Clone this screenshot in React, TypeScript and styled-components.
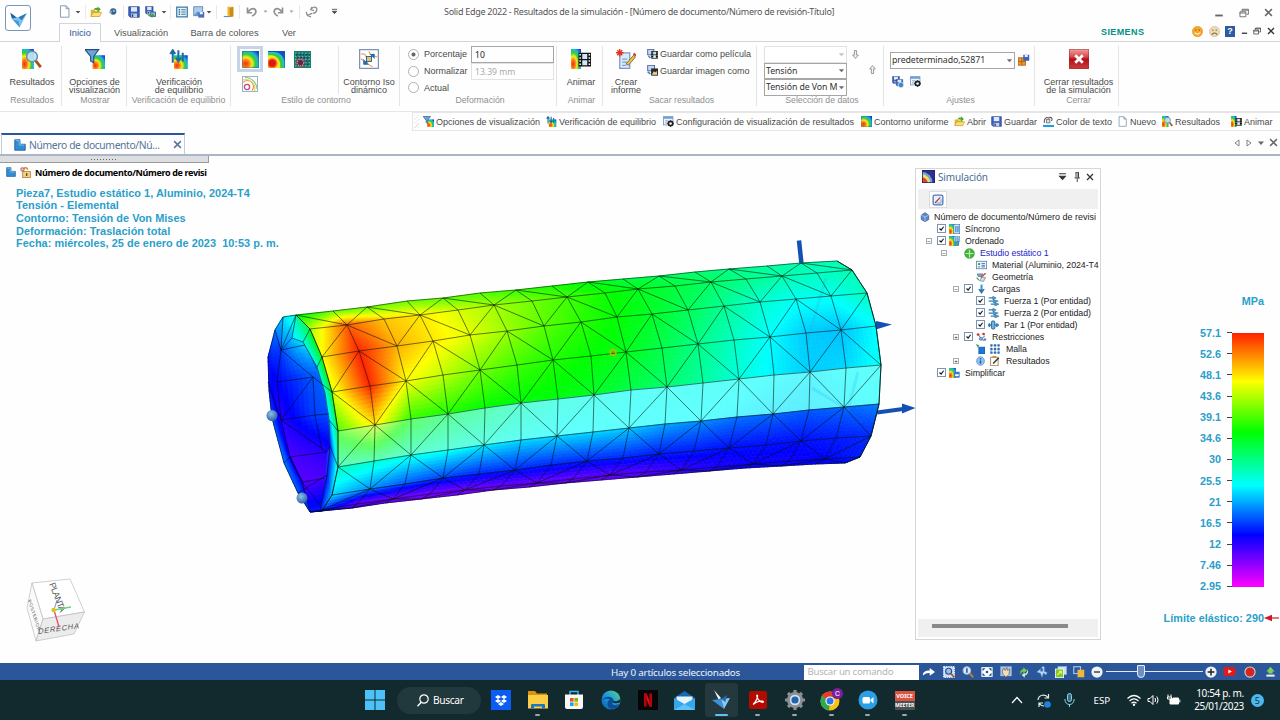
import React from "react";
import styled, { createGlobalStyle } from "styled-components";

type Pt = [number, number];

// ---------- colour scale ----------

const stops: [number, number[]][] = [
  [0, [255, 0, 255]],
  [0.1, [128, 0, 255]],
  [0.2, [0, 0, 255]],
  [0.4, [0, 255, 255]],
  [0.61, [0, 255, 0]],
  [0.81, [255, 255, 0]],
  [1, [255, 32, 0]],
];

const colorAt = (t: number, light = 0) => {
  const v = Math.max(0, Math.min(1, t));
  let i = 0;
  while (i < stops.length - 2 && v > stops[i + 1][0]) i++;
  const [a, ca] = stops[i];
  const [b, cb] = stops[i + 1];
  const k = (v - a) / (b - a);
  const rgb = ca.map((c, n) => {
    const x = c + (cb[n] - c) * k;
    return Math.round(x + (255 - x) * light);
  });
  return `rgb(${rgb.join(",")})`;
};

// ---------- mesh ----------

const rows: Pt[][] = [
  [[296, 315], [333, 311], [367, 307], [407, 301], [443, 298], [480, 293], [516, 290], [552, 286], [588, 282], [623, 279], [659, 276], [695, 272], [729, 269], [767, 266], [801, 263], [837, 261]],
  [[310, 329], [347, 325], [384, 319], [420, 315], [458, 310], [494, 305], [532, 301], [567, 297], [605, 293], [638, 289], [675, 286], [711, 282], [746, 279], [782, 276], [817, 273], [852, 270]],
  [[322, 357], [359, 351], [397, 346], [433, 341], [470, 335], [507, 331], [544, 326], [581, 322], [617, 317], [652, 314], [688, 310], [724, 306], [760, 302], [796, 299], [831, 296], [867, 293]],
  [[332, 392], [370, 386], [406, 381], [443, 375], [480, 370], [517, 365], [553, 360], [591, 356], [626, 352], [662, 348], [698, 344], [734, 340], [770, 337], [806, 333], [841, 330], [876, 326]],
  [[338, 431], [375, 425], [411, 419], [448, 414], [485, 408], [521, 403], [558, 399], [594, 395], [631, 390], [667, 387], [703, 383], [739, 379], [774, 375], [810, 372], [846, 368], [881, 365]],
  [[338, 467], [374, 461], [411, 455], [448, 450], [484, 445], [521, 440], [557, 436], [593, 432], [629, 428], [665, 424], [701, 421], [737, 417], [773, 414], [809, 410], [844, 407], [879, 404]],
  [[332, 495], [370, 489], [405, 484], [443, 478], [479, 474], [515, 470], [551, 465], [587, 461], [623, 458], [659, 454], [694, 451], [729, 448], [766, 445], [801, 441], [836, 438], [871, 436]],
  [[322, 510], [357, 504], [393, 499], [430, 494], [465, 490], [501, 486], [537, 483], [573, 479], [610, 475], [646, 472], [681, 470], [717, 467], [753, 464], [789, 461], [825, 459], [860, 457]],
  [[310, 512], [352, 508], [385, 503], [421, 499], [457, 495], [493, 490], [529, 487], [565, 483], [601, 480], [637, 477], [673, 474], [709, 471], [745, 468], [781, 466], [815, 464], [845, 463]],
];

// [upper edge values, lower edge values, whitening]
const strips: [number[], number[], number][] = [
  [
    [0.58, 0.68, 0.69, 0.69, 0.68, 0.67, 0.65, 0.63, 0.6, 0.56, 0.54, 0.52, 0.5, 0.48, 0.47, 0.46],
    [0.74, 0.95, 0.85, 0.82, 0.77, 0.73, 0.7, 0.66, 0.62, 0.59, 0.56, 0.53, 0.5, 0.47, 0.45, 0.46],
    0,
  ],
  [
    [0.74, 0.95, 0.86, 0.83, 0.78, 0.74, 0.7, 0.66, 0.62, 0.59, 0.56, 0.53, 0.5, 0.47, 0.45, 0.46],
    [0.81, 1, 0.88, 0.83, 0.79, 0.73, 0.68, 0.64, 0.61, 0.58, 0.54, 0.49, 0.44, 0.41, 0.41, 0.45],
    0,
  ],
  [
    [0.81, 1, 0.88, 0.83, 0.79, 0.73, 0.68, 0.64, 0.61, 0.58, 0.54, 0.49, 0.44, 0.41, 0.41, 0.45],
    [0.78, 1, 0.81, 0.76, 0.7, 0.66, 0.63, 0.61, 0.59, 0.55, 0.5, 0.45, 0.4, 0.36, 0.35, 0.4],
    0,
  ],
  [
    [0.78, 1, 0.81, 0.76, 0.7, 0.66, 0.63, 0.61, 0.59, 0.55, 0.5, 0.45, 0.4, 0.36, 0.35, 0.4],
    [0.67, 0.83, 0.65, 0.63, 0.61, 0.6, 0.6, 0.58, 0.55, 0.52, 0.48, 0.43, 0.39, 0.36, 0.37, 0.41],
    0,
  ],
  [
    [0.64, 0.78, 0.6, 0.54, 0.5, 0.46, 0.43, 0.42, 0.41, 0.41, 0.41, 0.41, 0.4, 0.39, 0.4, 0.41],
    [0.48, 0.49, 0.46, 0.44, 0.43, 0.41, 0.4, 0.4, 0.4, 0.4, 0.4, 0.39, 0.38, 0.38, 0.39, 0.4],
    0.37,
  ],
  [
    [0.45, 0.44, 0.42, 0.41, 0.39, 0.37, 0.37, 0.37, 0.36, 0.33, 0.31, 0.29, 0.28, 0.27, 0.28, 0.3],
    [0.37, 0.31, 0.27, 0.25, 0.23, 0.23, 0.23, 0.23, 0.23, 0.22, 0.22, 0.21, 0.21, 0.21, 0.22, 0.23],
    0,
  ],
  [
    [0.37, 0.29, 0.25, 0.23, 0.22, 0.22, 0.22, 0.22, 0.22, 0.22, 0.22, 0.21, 0.21, 0.21, 0.22, 0.23],
    [0.24, 0.12, 0.11, 0.11, 0.11, 0.12, 0.12, 0.12, 0.13, 0.14, 0.16, 0.18, 0.19, 0.19, 0.2, 0.22],
    0,
  ],
  [
    [0.24, 0.12, 0.11, 0.11, 0.11, 0.12, 0.12, 0.12, 0.13, 0.14, 0.16, 0.18, 0.19, 0.19, 0.2, 0.22],
    [0.2, 0.15, 0.12, 0.11, 0.11, 0.11, 0.11, 0.12, 0.12, 0.13, 0.15, 0.17, 0.19, 0.19, 0.2, 0.2],
    0,
  ],
];

// end face of the tube, as quads: corners followed by their values
const endQuads: [Pt, Pt, Pt, Pt, number[]][] = [
  // bore
  [[281, 350], [292, 338], [277, 382], [313, 377], [0.24, 0.36, 0.2, 0.27]],
  [[292, 338], [303, 342], [313, 377], [319, 375], [0.36, 0.38, 0.27, 0.28]],
  [[277, 382], [313, 377], [281, 420], [315, 415], [0.2, 0.27, 0.17, 0.25]],
  [[313, 377], [319, 375], [315, 415], [329, 413], [0.27, 0.28, 0.25, 0.26]],
  [[281, 420], [315, 415], [290, 457], [327, 452], [0.17, 0.25, 0.14, 0.17]],
  [[315, 415], [329, 413], [327, 452], [330, 446], [0.25, 0.26, 0.17, 0.2]],
  [[290, 457], [327, 452], [302, 482], [325, 478], [0.14, 0.17, 0.13, 0.14]],
  [[302, 482], [325, 478], [310, 512], [323, 511], [0.13, 0.15, 0.22, 0.22]],
  // left side of the rim
  [[283, 317], [296, 315], [281, 350], [292, 338], [0.38, 0.44, 0.3, 0.33]],
  [[283, 317], [281, 350], [275, 330], [279, 352], [0.36, 0.28, 0.32, 0.26]],
  [[275, 330], [281, 350], [268, 357], [277, 382], [0.3, 0.24, 0.22, 0.2]],
  [[268, 357], [277, 382], [269, 390], [281, 420], [0.22, 0.19, 0.21, 0.17]],
  [[269, 390], [281, 420], [272, 418], [290, 457], [0.22, 0.18, 0.26, 0.19]],
  [[272, 418], [290, 457], [284, 463], [302, 482], [0.28, 0.18, 0.3, 0.19]],
  [[284, 463], [302, 482], [298, 493], [310, 512], [0.3, 0.2, 0.28, 0.24]],
  // right side of the rim
  [[296, 315], [310, 329], [292, 338], [303, 342], [0.48, 0.56, 0.38, 0.42]],
  [[310, 329], [322, 357], [303, 342], [317, 367], [0.6, 0.6, 0.42, 0.42]],
  [[322, 357], [332, 392], [317, 367], [325, 393], [0.62, 0.6, 0.44, 0.42]],
  [[332, 392], [338, 431], [325, 393], [329, 420], [0.6, 0.56, 0.42, 0.36]],
  [[338, 431], [338, 467], [329, 420], [330, 446], [0.56, 0.47, 0.34, 0.24]],
  [[338, 467], [332, 495], [330, 446], [327, 475], [0.45, 0.38, 0.24, 0.22]],
  [[332, 495], [322, 511], [327, 475], [320, 511], [0.36, 0.26, 0.22, 0.22]],
];

const endOutline = "M283 317L275 330 268 357 269 390 272 418 284 463 298 493 310 512 322 511 332 495 338 467 338 431 332 392 322 357 310 329 296 315Z";

const endLines =
  endOutline +
  "M283 317L281 350 277 382 281 420 290 457 302 482 310 512" +
  "M275 330L281 350 292 338 303 342M296 315L292 338M281 350L296 315M281 350L305 345" +
  "M303 342L317 367 325 393 329 420 330 446 327 475 320 511" +
  "M281 350L313 377 332 392M277 382L313 377 315 415 322 450M313 377L281 420 315 415 329 414" +
  "M268 382L281 420 327 452 290 457 303 482 325 478M290 457L284 463M302 482L320 505M298 493L327 475" +
  "M303 342L310 329M317 367L322 357M329 420L338 431M330 446L338 467";

const lerp = (a: Pt, b: Pt, k: number): Pt => [a[0] + (b[0] - a[0]) * k, a[1] + (b[1] - a[1]) * k];

const patch = (a: Pt, b: Pt, c: Pt, d: Pt, v: number[], nx: number, ny: number, light: number, id: string) => {
  const out: React.ReactNode[] = [];
  const at = (x: number, y: number) => lerp(lerp(a, b, x), lerp(c, d, x), y);
  for (let i = 0; i < nx; i++) {
    for (let j = 0; j < ny; j++) {
      const x0 = i / nx;
      const x1 = (i + 1) / nx;
      const y0 = j / ny;
      const y1 = (j + 1) / ny;
      const mx = (x0 + x1) / 2;
      const my = (y0 + y1) / 2;
      const val = (v[0] * (1 - mx) + v[1] * mx) * (1 - my) + (v[2] * (1 - mx) + v[3] * mx) * my;
      const col = colorAt(val, light);
      const pts = [at(x0, y0), at(x1, y0), at(x1, y1), at(x0, y1)]
        .map((p) => `${p[0].toFixed(1)},${p[1].toFixed(1)}`)
        .join(" ");
      out.push(<polygon key={`${id}-${i}-${j}`} points={pts} fill={col} stroke={col} strokeWidth={0.7} />);
    }
  }
  return out;
};

const meshPath = () => {
  let d = "";
  const seg = (p: Pt, q: Pt) => {
    d += `M${p[0]} ${p[1]}L${q[0]} ${q[1]}`;
  };
  rows.forEach((row, r) => {
    d += "M" + row.map((p) => p.join(" ")).join("L");
    const next = rows[r + 1];
    if (!next) return;
    row.forEach((p, c) => seg(p, next[c]));
    // the diagonals change parity after the second row
    const odd = r === 1 || r === 2 || r === 4 || r === 6 ? 1 : 0;
    for (let c = odd; c < row.length; c += 2) {
      if (c > 0) seg(row[c], next[c - 1]);
      if (c < row.length - 1) seg(row[c], next[c + 1]);
    }
  });
  return d;
};

const Model = () => (
  <ModelSvg viewBox="0 156 1280 507">
    <defs>
      <radialGradient id="ball" cx="0.4" cy="0.35" r="0.7">
        <stop offset="0" stopColor="#8fc0ea" />
        <stop offset="1" stopColor="#2a5f9c" />
      </radialGradient>
    </defs>
    <path d="M799 240.500L801.500 264" stroke="#1450b4" strokeWidth="4.500" />
    <path d="M876 321L892 324.500L876 329.500Z" fill="#1450b4" />
    <path d="M877 412.500L903 409" stroke="#1450b4" strokeWidth="4" />
    <path d="M902 403.500L915.500 408L902 413.500Z" fill="#1450b4" />
    <path d={endOutline} fill="#1238f0" />
    {endQuads.map((q, i) => patch(q[0], q[1], q[2], q[3], q[4], 7, 8, 0, `e${i}`))}
    {strips.map(([up, down, light], r) =>
      rows[r].slice(0, -1).map((p, c) =>
        patch(p, rows[r][c + 1], rows[r + 1][c], rows[r + 1][c + 1], [up[c], up[c + 1], down[c], down[c + 1]], c < 3 ? 16 : 8, r > 5 ? 5 : 9, light, `s${r}-${c}`)
      )
    )}
    <path d="M826 278L806 345M858 372L848 410L812 388" fill="none" stroke="#2fa4d8" strokeOpacity="0.2" strokeWidth="3" />
    <path d={meshPath()} fill="none" stroke="#001408" strokeOpacity="0.75" strokeWidth="0.75" />
    <path d="M837 261L852 270L867 293L876 326L881 365L879 404L871 436L860 457L845 463" fill="none" stroke="#001a20" strokeWidth="0.8" />
    <path d={endLines} fill="none" stroke="#00081c" strokeOpacity="0.75" strokeWidth="0.75" />
    <circle cx="272" cy="415.500" r="5.500" fill="url(#ball)" />
    <circle cx="302" cy="498" r="5.500" fill="url(#ball)" />
    <circle cx="613" cy="352.500" r="3" fill="none" stroke="#c8b400" strokeWidth="1.400" />
    <circle cx="613" cy="352.500" r="1" fill="#b87a00" />
  </ModelSvg>
);

// ---------- icons, drawn on a 16x16 box ----------

const floppy = (
  <>
    <path d="M1 1H15V15H3L1 13Z" fill="#3c62b8" stroke="#23408a" />
    <rect x="4" y="1.500" width="8" height="6" fill="#dfe9fa" />
    <rect x="4" y="10" width="8" height="5" fill="#c3cde4" />
    <rect x="5" y="11" width="2" height="3.500" fill="#23408a" />
  </>
);

const film = (
  <>
    <rect x="6" y="3" width="10" height="11" fill="#111" />
    <rect x="9" y="4" width="4" height="4" fill="#cfe8f4" />
    <rect x="9" y="9" width="4" height="4" fill="#cfe8f4" />
    <path d="M7.300 4V14M14.700 4V14" stroke="#fff" strokeWidth="1.200" strokeDasharray="1.200 1.300" />
  </>
);

const icons: Record<string, React.ReactNode> = {
  app: (
    <>
      <path d="M1 3L7 7.500L6 10L2.500 8.500Z" fill="#1f5f9c" />
      <path d="M2 8L8 7L15 3.500L9 15.500Z" fill="#7fc0ea" />
      <path d="M8 7L15 3.500L10.500 9.500Z" fill="#2a78b8" />
      <path d="M3.500 9L8 10L9 15.500Z" fill="#3f98d8" />
    </>
  ),
  doc: <path d="M3 1H10L13.500 4.500V15H3ZM10 1V4.500H13.500" fill="#fff" stroke="#7a8fae" strokeWidth="1.100" />,
  open: (
    <>
      <path d="M1 5H6L7 6.500H13V14H1Z" fill="#e3b528" />
      <path d="M1 14L4 8.500H15.500L13 14Z" fill="#fbe07a" stroke="#b98b10" strokeWidth="0.700" />
      <path d="M5 5Q6 1.500 10 2.500V0.500L14.500 4.300L10 8V5.500Q7 4.500 5 5Z" fill="#49a82f" />
    </>
  ),
  pin: (
    <>
      <circle cx="9" cy="8" r="4.600" fill="#33628f" />
      <path d="M2 9L7 6V11Z" fill="#8da3ba" />
      <circle cx="10" cy="7" r="1.700" fill="#8fb6d8" />
    </>
  ),
  save: floppy,
  saveall: (
    <>
      <g transform="scale(.72)">{floppy}</g>
      <path d="M7 8H14V14H7Z" fill="#8cb1e4" stroke="#23408a" />
      <path d="M3 11Q5 15 9 14V16L13 12.500L9 9.500V11.500Q6 12 3 11Z" fill="#46a235" />
    </>
  ),
  list: (
    <>
      <rect x="1" y="1.500" width="14" height="13" fill="#e7f3fb" stroke="#2a6a9b" strokeWidth="1.500" />
      <path d="M3.500 5H5.500M3.500 8H5.500M3.500 11H5.500" stroke="#1b7a9c" strokeWidth="1.700" />
      <path d="M7 5H13M7 8H13M7 11H13" stroke="#2a6a9b" strokeWidth="1.200" />
    </>
  ),
  saveimg: (
    <>
      <rect x="1" y="1" width="12" height="12" fill="#a8cdee" stroke="#5077a8" />
      <path d="M1 13L6 7L10 13Z" fill="#5e97c8" />
      <path d="M7 8H15V15.500H7Z" fill="#4c6fb5" />
      <rect x="9" y="8" width="4" height="3" fill="#eef3fb" />
    </>
  ),
  panel: (
    <>
      <path d="M6 1H13V13H6Z" fill="#edb32c" />
      <path d="M9 3L14 1V14L9 15Z" fill="#c98d12" />
      <path d="M1 14H9" stroke="#6a88b6" strokeWidth="1.500" />
    </>
  ),
  undo: <path d="M2 2V9H8M2.500 8.500C5 4 9 2 12 4.500C15 8 12 11.500 8 13.500" fill="none" stroke="#8f8f8f" strokeWidth="2.200" />,
  redo: <path d="M14 2V9H8M13.500 8.500C11 4 7 2 4 4.500C1 8 4 11.500 8 13.500" fill="none" stroke="#8f8f8f" strokeWidth="2.200" />,
  rotate: (
    <path d="M7 6L8.500 2.500M6.500 5.500L11 7M7 6C10 1 15 2 14.500 6C14 9 12 10 10 10.500M9 10L3 13M1.500 8.500L3 13L7.500 14.500" fill="none" stroke="#909090" strokeWidth="1.700" />
  ),
  contour: (
    <>
      <rect width="16" height="16" fill="url(#contour)" />
      <rect x="0.500" y="0.500" width="15" height="15" fill="none" stroke="#27528c" strokeOpacity="0.400" />
    </>
  ),
  contourBand: (
    <>
      <rect width="16" height="16" fill="#1550c8" />
      <path d="M0 1H6A10 10 0 0 1 15.500 10V16H0Z" fill="#15c7d8" />
      <path d="M0 2H5A10 10 0 0 1 14 11V16H0Z" fill="#3cc93c" />
      <path d="M0 4H4A9 9 0 0 1 11.500 12V16H0Z" fill="#f0e62a" />
      <circle cx="4" cy="11.500" r="5" fill="#f07a18" />
      <circle cx="4" cy="11.500" r="3.400" fill="#e01717" />
    </>
  ),
  contourDots: (
    <>
      <rect width="16" height="16" fill="#1c7a72" />
      <path d="M1 2H15M1 5H15M1 8H15M1 11H15M1 14H15" stroke="#58d070" strokeWidth="1.200" strokeDasharray="1.200 2" />
      <path d="M2 3.500H15M3 6.500H15M2 9.500H15M3 12.500H15" stroke="#1a2d8c" strokeWidth="1.300" strokeDasharray="1.500 1.500" />
      <circle cx="6" cy="11" r="4.500" fill="#b04060" fillOpacity="0.600" />
      <circle cx="6" cy="11" r="3" fill="#5c2466" strokeDasharray="1 1" stroke="#e0b050" />
    </>
  ),
  contourLines: (
    <>
      <rect x="0.500" y="0.500" width="15" height="15" fill="#fffdf4" stroke="#9cb0cc" />
      <circle cx="5" cy="11" r="2.600" fill="none" stroke="#c04890" strokeWidth="1.300" />
      <path d="M1 6.500A5.500 5.500 0 0 1 10 14.500" fill="none" stroke="#e88858" strokeWidth="1.100" />
      <path d="M1 4A9 9 0 0 1 12.500 15" fill="none" stroke="#e6d450" strokeWidth="1.100" />
      <path d="M3 1.500A12 12 0 0 1 15 13" fill="none" stroke="#7cc890" strokeWidth="1.100" />
    </>
  ),
  results: (
    <>
      <rect x="0" y="0" width="9.500" height="16" fill="url(#contour)" />
      <circle cx="8" cy="6" r="4.300" fill="#bfe3f6" fillOpacity="0.900" stroke="#6c8ca8" strokeWidth="1.200" />
      <path d="M11 9.500L15 14.500" stroke="#a5521c" strokeWidth="2.300" />
    </>
  ),
  funnel: (
    <>
      <rect x="6" y="5" width="10" height="11" fill="url(#contour)" />
      <path d="M0 0.500H11L7 6V11L4.500 9.500V6Z" fill="#6fa4d4" stroke="#214f86" strokeWidth="0.900" />
    </>
  ),
  balance: (
    <>
      <rect x="4" y="5" width="11" height="11" fill="url(#contour)" />
      <path d="M3 11V2M1 4L3 1L5 4M7.500 1V9M5.500 7L7.500 10L9.500 7M11 3V10" fill="none" stroke="#1c6a9e" strokeWidth="1.600" />
    </>
  ),
  iso: (
    <>
      <rect x="0.500" y="0.500" width="15" height="15" fill="#fff" stroke="#7f93b4" />
      <path d="M1.500 4Q6 3 6 8T11 14M1.500 8Q4 8 4 12M8 2Q9 6 14.500 6" fill="none" stroke="#e8a27a" strokeWidth="1" />
      <path d="M4 12L12 4" stroke="#1f5aa0" strokeWidth="1.300" />
      <path d="M8.500 4H12.500V8ZM3.500 8V12.500H8Z" fill="#1f6cb0" />
      <rect x="6" y="6" width="4" height="4" fill="#e9c552" stroke="#1f5aa0" strokeWidth="0.700" />
    </>
  ),
  animate: (
    <>
      <rect x="0" y="0" width="8" height="16" fill="url(#contour)" />
      {film}
    </>
  ),
  report: (
    <>
      <path d="M3 3H11V15.500H3Z" fill="#dbeafb" stroke="#7c98c4" />
      <path d="M5 8H9M5 10.500H9M5 13H8" stroke="#7ba0d4" strokeWidth="1" />
      <path d="M3 0V6M0 3H6M1 1L5 5M5 1L1 5" stroke="#e03324" strokeWidth="1.100" />
      <path d="M8 12L14 5L15.500 6.500L10 13Z" fill="#f4c22e" stroke="#56564a" strokeWidth="0.600" />
      <path d="M14 3.500L16 5.500" stroke="#d2322a" strokeWidth="1.600" />
    </>
  ),
  movie: (
    <>
      <rect x="1" y="0.500" width="9" height="8" fill="#c5d8f4" stroke="#4c5f9c" strokeWidth="1.300" />
      {film}
      <path d="M2 10L5 13" stroke="#3a78c4" strokeWidth="2" />
    </>
  ),
  image: (
    <>
      <rect x="1" y="0.500" width="10" height="8" fill="#c5d8f4" stroke="#4c5f9c" strokeWidth="1.300" />
      <rect x="6" y="5" width="10" height="10.500" fill="#2a2a2a" />
      <path d="M7 14L10 9L12 11L14 8.500L15 14Z" fill="#e5dc8c" />
      <path d="M1 10L5 13" stroke="#3a78c4" strokeWidth="2" />
    </>
  ),
  boxes: (
    <>
      <path d="M0 5H10V15H0Z" fill="#e99a28" stroke="#a5560f" />
      <path d="M0 10H10M5 5V15" stroke="#a5560f" />
      <path d="M7 1H15V9H7Z" fill="#3c62b8" />
      <rect x="9" y="1" width="4" height="3" fill="#eef" />
    </>
  ),
  disks: (
    <>
      <g transform="scale(.66)">{floppy}</g>
      <g transform="translate(5 4) scale(.62)">{floppy}</g>
      <circle cx="12" cy="12" r="3.500" fill="#3b86cf" stroke="#fff" strokeWidth="0.700" />
    </>
  ),
  config: (
    <>
      <rect x="0.500" y="1" width="14" height="12" fill="#eef5fc" stroke="#5d83b4" />
      <rect x="0.500" y="1" width="14" height="3" fill="#6f9fd6" />
      <path d="M3 7H8M3 10H7" stroke="#5d83b4" />
      <circle cx="11" cy="11" r="3.200" fill="none" stroke="#222" strokeWidth="2.200" />
      <path d="M11 6V16M6 11H16M7.500 7.500L14.500 14.500M14.500 7.500L7.500 14.500" stroke="#222" strokeWidth="1.200" />
      <circle cx="11" cy="11" r="1.700" fill="#fff" />
    </>
  ),
  close: (
    <>
      <rect x="0" y="0" width="16" height="16" rx="1" fill="url(#redBtn)" stroke="#8c3434" strokeWidth="0.700" />
      <path d="M5 5L11 11M11 5L5 11" stroke="#fff" strokeWidth="2.200" />
    </>
  ),
  textcolor: (
    <>
      <path d="M2 10C1 4 5 1 8 3C12 0 15 5 12 7" fill="none" stroke="#555" strokeWidth="1.500" />
      <path d="M5 5H10V10H5Z" fill="#ddd" stroke="#555" />
      <rect x="0" y="13" width="16" height="3" fill="#1ba0dc" />
    </>
  ),
  part: (
    <>
      <path d="M1 1H8V7H15V15H1Z" fill="#2f8ed4" stroke="#174f92" />
      <path d="M2 2H7V8H14" fill="none" stroke="#96cdf0" />
    </>
  ),
  lock: (
    <>
      <path d="M5 7V4A3 3 0 0 1 11 4" fill="none" stroke="#c88b3c" strokeWidth="2" />
      <rect x="4" y="6.500" width="11" height="9" fill="#f2cf84" stroke="#a86c20" />
      <circle cx="3.500" cy="3.500" r="2.600" fill="#e9b4a4" stroke="#a2503a" />
      <rect x="8.700" y="9" width="2" height="4" fill="#6b430d" />
    </>
  ),
  simul: (
    <>
      <rect width="16" height="16" fill="#2c2f96" />
      <path d="M0 2A14 14 0 0 1 13 16H0Z" fill="#7aa2cc" />
      <path d="M0 5A11 11 0 0 1 10 16H0Z" fill="#e9e36a" />
      <path d="M0 9A7 7 0 0 1 7 16H0Z" fill="#e8451a" />
      <rect x="0.500" y="0.500" width="15" height="15" fill="none" stroke="#26286c" />
    </>
  ),
  edit: (
    <>
      <rect x="1.500" y="1.500" width="13" height="13" rx="2" fill="#e8f1fb" stroke="#4a77b8" strokeWidth="1.700" />
      <path d="M4 12L11 4.500" stroke="#c43b3b" strokeWidth="1.800" />
      <path d="M6 12H12V7" fill="none" stroke="#6ba4dc" strokeWidth="1.300" />
    </>
  ),
  cube: (
    <>
      <path d="M2 5L8 1L14 5V12L8 15.500L2 12Z" fill="#5a88c8" stroke="#28508e" />
      <path d="M2 5L8 8L14 5M8 8V15" fill="none" stroke="#d4e4f8" />
    </>
  ),
  sync: (
    <>
      <rect width="9" height="16" fill="url(#contour)" />
      <rect x="7" y="0.500" width="8.500" height="15" fill="#d8e8f8" stroke="#3a78b8" />
      <path d="M10 3V13M13 3V13" stroke="#2b79c4" strokeWidth="1.600" />
    </>
  ),
  ordered: (
    <>
      <rect width="9" height="16" fill="url(#contour)" />
      <path d="M7 0.500H15.500V9H7Z" fill="#bfe0f4" stroke="#3a78b8" />
      <path d="M10 2V8M13 2V12M9 15V10H14V15Z" fill="#58b058" stroke="#2b79c4" strokeWidth="1.300" />
    </>
  ),
  simplify: (
    <>
      <rect width="10" height="16" fill="url(#contour)" />
      <path d="M7 6H15.500V15.500H7Z" fill="#3a78c8" />
      <path d="M9 10H14V13H9Z" fill="#fff" />
    </>
  ),
  study: (
    <>
      <circle cx="8" cy="8" r="7" fill="#3fb53c" stroke="#2a8a2c" />
      <path d="M8 2V14M2 8H14" stroke="#b6f0a6" strokeWidth="1.800" />
    </>
  ),
  material: (
    <>
      <rect x="0.500" y="2" width="15" height="12" fill="#f2f8fd" stroke="#5a7fae" strokeWidth="1.300" />
      <path d="M3 5H6V8H3Z" fill="#3c9a4a" />
      <path d="M3 11H6M8 5.500H13M8 8.500H13M8 11H13" stroke="#3974b4" strokeWidth="1.400" />
    </>
  ),
  geometry: (
    <>
      <path d="M2 3H10L8 7H3Z" fill="#88a8c8" stroke="#46688c" />
      <path d="M5 14L9 8L14 9L11 15Z" fill="#d0dce8" stroke="#5e7896" />
      <path d="M7 9L14 2" stroke="#c44a2c" strokeWidth="1.900" />
      <path d="M1 9L4 13" stroke="#3b9a4c" strokeWidth="1.500" />
    </>
  ),
  load: (
    <>
      <path d="M8 1V10" stroke="#3f96d4" strokeWidth="3" />
      <path d="M4 8.500L8 15L12 8.500L8 10Z" fill="#2c7fc4" stroke="#1d5c8c" strokeWidth="1" />
    </>
  ),
  force: (
    <>
      <path d="M1 3H8M1 8H8M4 13H11" stroke="#2f7cb4" strokeWidth="2" />
      <path d="M7 0.500L12 3L7 6ZM8 5.500L15 8L8 11ZM10 10L16 13L10 16Z" fill="#4f9fd0" stroke="#1d5c8c" strokeWidth="0.700" />
    </>
  ),
  torque: (
    <>
      <rect x="5" y="1.500" width="5" height="13" rx="2" fill="#74b0dc" stroke="#1d5c8c" strokeWidth="1.300" />
      <path d="M0 8H5M10 8H16M2 5V11M13 5V11" stroke="#2f7cb4" strokeWidth="2.300" />
    </>
  ),
  restrict: (
    <>
      <path d="M3 4L8 11L13 6M8 11L12 14" stroke="#6c88b8" strokeWidth="1.500" fill="none" />
      <circle cx="3" cy="4" r="2" fill="#c23a3a" />
      <circle cx="11" cy="3" r="2" fill="#c23a3a" />
      <circle cx="7" cy="11" r="2.300" fill="#8ab6e0" stroke="#416a9c" />
      <circle cx="13" cy="12" r="2" fill="#5a8cc0" />
    </>
  ),
  square: (
    <>
      <rect x="5" y="5" width="11" height="11" fill="#1878d8" stroke="#0e4f98" />
      <path d="M0 0L6 2L3 6Z" fill="#35a04a" />
    </>
  ),
  mesh: (
    <>
      <path d="M2 2H14M2 8H14M2 14H14M2 2V14M8 2V14M14 2V14" stroke="#8cb4dc" />
      <path d="M0.500 0.500H4V4H0.500ZM6.300 0.500H9.800V4H6.300ZM12 0.500H15.500V4H12ZM0.500 6.300H4V9.800H0.500ZM6.300 6.300H9.800V9.800H6.300ZM12 6.300H15.500V9.800H12ZM0.500 12H4V15.500H0.500ZM6.300 12H9.800V15.500H6.300ZM12 12H15.500V15.500H12Z" fill="#2f6cae" />
    </>
  ),
  info: (
    <>
      <circle cx="8" cy="8" r="7" fill="#8fc0ee" stroke="#4a84c4" />
      <path d="M8 7V12M8 3.500V5.500" stroke="#1d4f9c" strokeWidth="2.400" />
    </>
  ),
  notes: (
    <>
      <rect x="1" y="2" width="12" height="13.500" fill="#fff" stroke="#a8885a" strokeWidth="1.500" />
      <rect x="4" y="0" width="6" height="3" fill="#c89038" />
      <path d="M5 12L14 3" stroke="#444" strokeWidth="2.600" />
    </>
  ),
  smile: (
    <>
      <circle cx="8" cy="8" r="7.500" fill="#f5a92c" stroke="#d98312" strokeWidth="0.700" />
      <path d="M4 9.500Q8 14 12 9.500" fill="none" stroke="#fff3d0" strokeWidth="1.600" />
      <path d="M5.500 5V7M10.500 5V7" stroke="#8a4a08" strokeWidth="1.300" />
    </>
  ),
  sad: (
    <>
      <circle cx="8" cy="8" r="7.500" fill="#eddab4" stroke="#c8b284" strokeWidth="0.700" />
      <path d="M4 12.500Q8 8 12 12.500" fill="none" stroke="#6e5c3c" strokeWidth="1.500" />
      <path d="M5.500 5V7M10.500 5V7" stroke="#6e5c3c" strokeWidth="1.300" />
    </>
  ),
  min: <path d="M2 12H14" stroke="currentColor" strokeWidth="3" />,
  restore: <path d="M1.500 6H11V14H1.500ZM1 8H11M5 5V2H15V10H12M5 3.500H15" fill="none" stroke="currentColor" strokeWidth="1.400" />,
  x: <path d="M2 2L14 14M14 2L2 14" stroke="currentColor" strokeWidth="2.600" />,
  caret: <path d="M2 5H14L8 12Z" fill="currentColor" />,
  menu: <path d="M2 3H14M3 7.500H13L8 13Z" fill="currentColor" stroke="currentColor" strokeWidth="2" />,
  left: <path d="M12 2L4 8L12 14Z" fill="none" stroke="currentColor" strokeWidth="1.600" />,
  right: <path d="M4 2L12 8L4 14Z" fill="none" stroke="currentColor" strokeWidth="1.600" />,
  tack: <path d="M5 1H12M6 1V9M11 1V9M3 9.500H14M8.500 10V16M10 2V9" fill="none" stroke="currentColor" strokeWidth="1.600" />,
  down: <path d="M6 1H10V9H13L8 15L3 9H6Z" fill="#f3f3f3" stroke="#777" strokeWidth="1.300" />,
  up: <path d="M6 15H10V7H13L8 1L3 7H6Z" fill="#f3f3f3" stroke="#777" strokeWidth="1.300" />,
  share: <path d="M0 10Q3 5 9 6V2.500L16 8L9 13V9.500Q4 9 0 12.500Z" fill="#fff" />,
  zoomarea: (
    <>
      <rect x="1" y="1" width="14" height="14" fill="#c8dcf4" stroke="#fff" strokeWidth="1.500" strokeDasharray="2 1" />
      <circle cx="7.500" cy="7" r="4" fill="#9cc0ec" stroke="#274f8c" strokeWidth="1.500" />
      <path d="M10.500 10L15 15" stroke="#a05a24" strokeWidth="2.400" />
    </>
  ),
  zoom: (
    <>
      <circle cx="6.500" cy="6" r="5" fill="#d6e8fa" stroke="#9cb8d8" strokeWidth="1.500" />
      <path d="M6.500 3V9" stroke="#274f8c" strokeWidth="2" />
      <path d="M10.500 10L15 15" stroke="#c07a34" strokeWidth="2.600" />
    </>
  ),
  fit: (
    <>
      <rect x="0.500" y="1.500" width="15" height="13" fill="#fff" />
      <path d="M2 3H6L2 7ZM14 3H10L14 7ZM2 13H6L2 9ZM14 13H10L14 9Z" fill="#274f8c" />
      <rect x="6.500" y="6.500" width="3" height="3" fill="#274f8c" />
    </>
  ),
  pan: (
    <>
      <rect x="0.500" y="0.500" width="15" height="13" fill="#a8c4e8" />
      <path d="M3 7L5 3L7 6L9 2L10 6L13 4L12 11L8 15L4 11Z" fill="#f2dcc0" stroke="#5a4634" strokeWidth="0.800" />
    </>
  ),
  spin: (
    <>
      <path d="M4 12Q1 6 7 4V1.500L12 6L7 9.500V7Q4 8 4 12Z" fill="#6ad04a" />
      <path d="M12 4Q16 10 9 13V15.500L5 12L9 8.500V10.500Q13 9 12 4Z" fill="#d2f0c4" />
    </>
  ),
  orient: (
    <path d="M1 8L6 4V7H9V3L7 3L9.500 0L12 3H11V7L15 9L13 12L10 9L8 15L6 9.500Z" fill="#b8dcfa" stroke="#5a94d4" strokeWidth="0.700" />
  ),
  views: (
    <>
      <rect x="4" y="0.500" width="11.500" height="11" fill="#cfe0f6" stroke="#84a8dc" />
      <rect x="0.500" y="4" width="11" height="11.500" fill="#7ac63e" stroke="#fff" />
      <path d="M3 12L8 7M5 7H8.500V10.500" stroke="#f4f430" strokeWidth="1.600" fill="none" />
    </>
  ),
  style: (
    <>
      <rect x="1" y="1" width="9" height="9" fill="none" stroke="#a8c4ec" strokeWidth="1.500" />
      <path d="M6 5H15V15H6Z" fill="#f0b63a" />
    </>
  ),
  minus: (
    <>
      <circle cx="8" cy="8" r="7.500" fill="#eef2f8" />
      <path d="M4 8H12" stroke="#444" strokeWidth="2" />
    </>
  ),
  plus: (
    <>
      <circle cx="8" cy="8" r="7.500" fill="#eef2f8" />
      <path d="M3.500 8H12.500M8 3.500V12.500" stroke="#222" strokeWidth="2" />
    </>
  ),
  youtube: (
    <>
      <rect x="0.500" y="2.500" width="15" height="11" rx="3" fill="#e01b1b" />
      <path d="M6.500 5.500L11 8L6.500 10.500Z" fill="#fff" />
    </>
  ),
  record: (
    <>
      <circle cx="8" cy="8" r="7.500" fill="#d8ccd0" />
      <circle cx="8" cy="8" r="6" fill="#d4271c" />
    </>
  ),
  upload: (
    <>
      <path d="M8 1L14 8H11V11H5V8H2Z" fill="#7fd05a" />
      <rect x="2" y="12.500" width="12" height="3" fill="#e8f2e4" />
    </>
  ),
};

const Icon = ({ name, size = 12, h }: { name: string; size?: number; h?: number }) => (
  <IconSvg viewBox="0 0 16 16" width={size} height={h ?? size} preserveAspectRatio="none">
    {icons[name]}
  </IconSvg>
);

// ---------- data ----------

// name, slot width, icon size, colour
const quickItems: [string, number, number, string?][] = [
  ["doc", 17, 13],
  ["caret", 9, 6],
  ["|", 6, 0],
  ["open", 16, 12],
  ["pin", 16, 11],
  ["|", 6, 0],
  ["save", 16, 12],
  ["saveall", 17, 12],
  ["caret", 9, 6],
  ["|", 4, 0],
  ["list", 19, 12],
  ["saveimg", 16, 12],
  ["caret", 4, 6],
  ["|", 10, 0],
  ["panel", 15, 12],
  ["|", 6, 0],
  ["undo", 19, 12],
  ["caret", 8, 5, "#999"],
  ["redo", 18, 12],
  ["caret", 8, 5, "#999"],
  ["|", 9, 0],
  ["rotate", 14, 13],
  ["menu", 32, 7],
];

const commandItems: [string, string, number][] = [
  ["funnel", "Opciones de visualización", 123],
  ["balance", "Verificación de equilibrio", 117],
  ["config", "Configuración de visualización de resultados", 198],
  ["contour", "Contorno uniforme", 93],
  ["open", "Abrir", 37],
  ["save", "Guardar", 52],
  ["textcolor", "Color de texto", 74],
  ["doc", "Nuevo", 45],
  ["results", "Resultados", 69],
  ["animate", "Animar", 49],
];

const notes = [
  "Pieza7, Estudio estático 1, Aluminio, 2024-T4",
  "Tensión - Elemental",
  "Contorno: Tensión de Von Mises",
  "Deformación: Traslación total",
  "Fecha: miércoles, 25 de enero de 2023\u00a0 10:53 p. m.",
];

type Node = { label: string; indent: number; exp?: "+" | "-"; check?: boolean; icon: string; icon2?: string; blue?: boolean };

const tree: Node[] = [
  { label: "Síncrono", indent: 8, check: true, icon: "sync" },
  { label: "Ordenado", indent: 8, exp: "-", check: true, icon: "ordered" },
  { label: "Estudio estático 1", indent: 23, exp: "-", icon: "study", blue: true },
  { label: "Material (Aluminio, 2024-T4", indent: 35, icon: "material" },
  { label: "Geometría", indent: 35, icon: "geometry" },
  { label: "Cargas", indent: 35, exp: "-", check: true, icon: "load" },
  { label: "Fuerza 1 (Por entidad)", indent: 47, check: true, icon: "force" },
  { label: "Fuerza 2 (Por entidad)", indent: 47, check: true, icon: "force" },
  { label: "Par 1 (Por entidad)", indent: 47, check: true, icon: "torque" },
  { label: "Restricciones", indent: 35, exp: "+", check: true, icon: "restrict" },
  { label: "Malla", indent: 35, icon: "square", icon2: "mesh" },
  { label: "Resultados", indent: 35, exp: "+", icon: "info", icon2: "notes" },
  { label: "Simplificar", indent: 8, check: true, icon: "simplify" },
];

const scale = ["57.1", "52.6", "48.1", "43.6", "39.1", "34.6", "30", "25.5", "21", "16.5", "12", "7.46", "2.95"];

const statusIcons: [string, number][] = [
  ["share", 20],
  ["zoomarea", 19],
  ["zoom", 19],
  ["fit", 19],
  ["pan", 19],
  ["spin", 18],
  ["orient", 18],
  ["views", 19],
  ["style", 18],
  ["minus", 18],
];

// ---------- parts ----------

const Defs = () => (
  <DefsSvg width="0" height="0">
    <defs>
      <radialGradient id="contour" cx="0.22" cy="0.75" r="0.95">
        <stop offset="0" stopColor="#f03010" />
        <stop offset="0.22" stopColor="#ff7a18" />
        <stop offset="0.4" stopColor="#f4ee20" />
        <stop offset="0.6" stopColor="#38cc38" />
        <stop offset="0.78" stopColor="#18b8e0" />
        <stop offset="1" stopColor="#1846c8" />
      </radialGradient>
      <linearGradient id="redBtn" x1="0" y1="0" x2="0" y2="1">
        <stop offset="0" stopColor="#f0a0a0" />
        <stop offset="0.4" stopColor="#d84848" />
        <stop offset="0.5" stopColor="#b4101c" />
        <stop offset="1" stopColor="#cc3c3c" />
      </linearGradient>
      <linearGradient id="edge" x1="0" y1="1" x2="1" y2="0">
        <stop offset="0" stopColor="#0c58b0" />
        <stop offset="0.5" stopColor="#1c9ae0" />
        <stop offset="1" stopColor="#62d67a" />
      </linearGradient>
    </defs>
  </DefsSvg>
);

const BigButton = ({ icon, lines, left, width }: { icon: string; lines: string[]; left: number; width: number }) => (
  <Big $left={left} $width={width}>
    <Icon name={icon} size={20} />
    <BigText>
      {lines.map((l) => (
        <span key={l}>{l}</span>
      ))}
    </BigText>
  </Big>
);

const Ribbon = () => (
  <RibbonBar>
    <Group $w={62}>
      <GroupBody>
        <BigButton icon="results" lines={["Resultados"]} left={2} width={60} />
      </GroupBody>
      <GroupName $shift={3}>Resultados</GroupName>
    </Group>
    <Group $w={65}>
      <GroupBody>
        <BigButton icon="funnel" lines={["Opciones de", "visualización"]} left={0} width={65} />
      </GroupBody>
      <GroupName $shift={2}>Mostrar</GroupName>
    </Group>
    <Group $w={104}>
      <GroupBody>
        <BigButton icon="balance" lines={["Verificación", "de equilibrio"]} left={0} width={104} />
      </GroupBody>
      <GroupName>Verificación de equilibrio</GroupName>
    </Group>
    <Group $w={169}>
      <GroupBody>
        <StyleGrid>
          <StyleBtn $on>
            <Icon name="contour" size={17} />
          </StyleBtn>
          <StyleBtn>
            <Icon name="contourBand" size={17} />
          </StyleBtn>
          <StyleBtn>
            <Icon name="contourDots" size={17} />
          </StyleBtn>
          <StyleBtn>
            <Icon name="contourLines" size={16} />
          </StyleBtn>
        </StyleGrid>
        <BigButton icon="iso" lines={["Contorno Iso", "dinámico"]} left={0} width={60} />
      </GroupBody>
      <GroupName $shift={2}>Estilo de contorno</GroupName>
    </Group>
    <Group $w={157}>
      <GroupBody>
        <Options>
          <Option>
            <Radio $on />
            <span>Porcentaje</span>
            <Field $w={83}>10</Field>
          </Option>
          <Option>
            <Radio />
            <span>Normalizar</span>
            <Field $w={83} $off>
              13.39 mm
            </Field>
          </Option>
          <Option>
            <Radio />
            <span>Actual</span>
          </Option>
        </Options>
      </GroupBody>
      <GroupName $shift={4}>Deformación</GroupName>
    </Group>
    <Group $w={46}>
      <GroupBody>
        <BigButton icon="animate" lines={["Animar"]} left={0} width={48} />
      </GroupBody>
      <GroupName $shift={4}>Animar</GroupName>
    </Group>
    <Group $w={154}>
      <GroupBody>
        <BigButton icon="report" lines={["Crear", "informe"]} left={0} width={46} />
        <SmallList>
          <Small>
            <Icon name="movie" size={11} />
            Guardar como película
          </Small>
          <Small>
            <Icon name="image" size={11} />
            Guardar imagen como
          </Small>
        </SmallList>
      </GroupBody>
      <GroupName $shift={4}>Sacar resultados</GroupName>
    </Group>
    <Group $w={127}>
      <GroupBody>
        <Selects>
          <Select $w={83} $off>
            <span />
            <Icon name="caret" size={7} />
          </Select>
          <Select $w={83}>
            <span>Tensión</span>
            <Icon name="caret" size={7} />
          </Select>
          <Select $w={83}>
            <span>Tensión de Von M</span>
            <Icon name="caret" size={7} />
          </Select>
        </Selects>
        <Arrows>
          <Icon name="down" size={9} />
          <Icon name="up" size={9} />
        </Arrows>
      </GroupBody>
      <GroupName $shift={4}>Selección de datos</GroupName>
    </Group>
    <Group $w={151}>
      <GroupBody>
        <Settings>
          <SetRow>
            <Select $w={125}>
              <span>predeterminado,52871</span>
              <Icon name="caret" size={7} />
            </Select>
            <Icon name="boxes" size={12} />
          </SetRow>
          <SetIcons>
            <Icon name="disks" size={12} />
            <Icon name="config" size={11} />
          </SetIcons>
        </Settings>
      </GroupBody>
      <GroupName $shift={3}>Ajustes</GroupName>
    </Group>
    <Group $w={84}>
      <GroupBody>
        <BigButton icon="close" lines={["Cerrar resultados", "de la simulación"]} left={0} width={87} />
      </GroupBody>
      <GroupName $shift={4}>Cerrar</GroupName>
    </Group>
  </RibbonBar>
);

const SimPanel = () => (
  <Panel>
    <PanelHead>
      <Icon name="simul" size={13} />
      <PanelTitle>Simulación</PanelTitle>
      <PanelBtns>
        <Icon name="menu" size={9} />
        <Icon name="tack" size={8} h={10} />
        <Icon name="x" size={8} />
      </PanelBtns>
    </PanelHead>
    <PanelTools>
      <PanelTool>
        <Icon name="edit" size={12} />
      </PanelTool>
    </PanelTools>
    <Tree>
      <Root>
        <Icon name="cube" size={10} />
        <span>Número de documento/Número de revisi</span>
      </Root>
      {tree.map((n) => (
        <TreeRow key={n.label} $indent={n.indent}>
          <Slot $w={11}>{n.exp && <Expander>{n.exp === "+" ? "+" : "−"}</Expander>}</Slot>
          <Slot $w={12}>
            {n.check && (
              <Check viewBox="0 0 9 9">
                <path d="M2 4.500L4 6.500L7.200 2.300" fill="none" stroke="#111" strokeWidth="1.400" />
              </Check>
            )}
          </Slot>
          <Slot $w={n.icon2 ? 14 : 16}>
            <Icon name={n.icon} size={n.icon2 ? 9 : 11} h={n.icon === "study" ? 11 : 10} />
          </Slot>
          {n.icon2 && (
            <Slot $w={16}>
              <Icon name={n.icon2} size={10} />
            </Slot>
          )}
          <TreeText $blue={n.blue}>{n.label}</TreeText>
        </TreeRow>
      ))}
    </Tree>
    <PanelScroll>
      <Thumb />
    </PanelScroll>
  </Panel>
);

const ViewCube = () => (
  <CubeSvg width="64" height="68" viewBox="24 576 64 68">
    <path d="M32 583L70 579L84.500 612L43 619Z" fill="#fff" stroke="#bbb" strokeWidth="0.700" />
    <path d="M32 583L43 619L36 641L27 608Z" fill="#fafafa" stroke="#bbb" strokeWidth="0.700" />
    <path d="M43 619L84.500 612L74 634L36 641Z" fill="#ececec" stroke="#bbb" strokeWidth="0.700" />
    <CubeText transform="translate(49 584) rotate(69)" fontSize="9" textLength="31">
      PLANTA
    </CubeText>
    <CubeText transform="translate(38 634) rotate(-8) skewX(-14)" fontSize="7.500" textLength="41">
      DERECHA
    </CubeText>
    <CubeText transform="translate(28 601) rotate(72) skewX(20)" fontSize="4.500" textLength="32">
      POSTERIOR
    </CubeText>
    <path d="M54 610L59 627" stroke="#e0506a" strokeWidth="1.300" />
    <path d="M54 610L71 607" stroke="#6ed46e" strokeWidth="1.300" />
    <path d="M54 610L57 600" stroke="#7080d0" strokeWidth="0.900" />
    <circle cx="53.500" cy="610" r="2.200" fill="#e0c020" />
  </CubeSvg>
);

const StatusBar = () => (
  <Status>
    <StatusText>Hay 0 artículos seleccionados</StatusText>
    <CommandBox>Buscar un comando</CommandBox>
    {statusIcons.map(([n, w]) => (
      <Center key={n} $w={w}>
        <Icon name={n} size={12} />
      </Center>
    ))}
    <Slider>
      <Knob />
    </Slider>
    <Center $w={16}>
      <Icon name="plus" size={12} />
    </Center>
    <Center $w={20}>
      <Icon name="youtube" size={13} />
    </Center>
    <Center $w={21}>
      <Icon name="record" size={12} />
    </Center>
    <Center $w={20}>
      <Icon name="upload" size={11} />
    </Center>
  </Status>
);

const Taskbar = () => (
  <Tasks>
    <StartBtn viewBox="0 0 20 20">
      <path d="M0 0H9.500V9.500H0ZM10.500 0H20V9.500H10.500ZM0 10.500H9.500V20H0ZM10.500 10.500H20V20H10.500Z" fill="#4cc2f8" />
    </StartBtn>
    <SearchPill>
      <svg width="12" height="13" viewBox="0 0 12 13">
        <circle cx="7" cy="5" r="4.200" fill="none" stroke="#fff" strokeWidth="1.200" />
        <path d="M4.200 8.300L0.500 12.300" stroke="#fff" strokeWidth="1.400" />
      </svg>
      Buscar
    </SearchPill>
    <Apps>
      <AppSlot>
        <svg width="20" height="20" viewBox="0 0 20 20">
          <rect width="20" height="20" fill="#0a5cf4" />
          <path d="M7 5L10 7L7 9L4 7ZM13 5L16 7L13 9L10 7ZM7 9L10 11L7 13L4 11ZM13 9L16 11L13 13L10 11ZM10 12L13 14L10 16L7 14Z" fill="#fff" />
        </svg>
      </AppSlot>
      <AppSlot $run>
        <svg width="20" height="20" viewBox="0 0 20 20">
          <path d="M0 1H7L9 3.500H19V8H0Z" fill="#d9930f" />
          <path d="M0 5H20V18.500H0Z" fill="#fcce45" />
          <path d="M3 18.500V15Q3 14 4 14H16Q17 14 17 15V18.500H14V16.500H6V18.500Z" fill="#1c76c8" />
        </svg>
      </AppSlot>
      <AppSlot>
        <svg width="20" height="20" viewBox="0 0 20 20">
          <path d="M6 5V1.500H14V5" fill="none" stroke="#42b3ee" strokeWidth="1.500" />
          <path d="M1 4.500H19V17Q19 19 17 19H3Q1 19 1 17Z" fill="#f6f8fa" />
          <rect x="6" y="8" width="3.600" height="3.600" fill="#ee4f28" />
          <rect x="10.400" y="8" width="3.600" height="3.600" fill="#7fb900" />
          <rect x="6" y="12.400" width="3.600" height="3.600" fill="#1ca4ee" />
          <rect x="10.400" y="12.400" width="3.600" height="3.600" fill="#fdb813" />
        </svg>
      </AppSlot>
      <AppSlot>
        <svg width="20" height="20" viewBox="0 0 20 20">
          <circle cx="10" cy="10" r="9.500" fill="url(#edge)" />
          <path d="M1 11C2 6 11 5 12.500 10C13 12 11 12.500 11.500 14C12.500 16 17 15 18.500 13C16 20 8 21 6.500 15C6 11 9 9.500 9 9.500C5 8 2 9 1 11Z" fill="#0d4c98" />
          <path d="M11.800 10.500C11.500 13 13 14 19 12.500C19.500 11.500 19.500 10 19 9C17 11.500 14 12 11.800 10.500Z" fill="#122a2e" />
        </svg>
      </AppSlot>
      <AppSlot>
        <svg width="20" height="20" viewBox="0 0 20 20">
          <rect width="20" height="20" fill="#060606" />
          <path d="M6 3.500H8.600L14 16.500H11.400Z" fill="#e50914" />
          <path d="M6 3.500H8.600V16.500H6ZM11.400 3.500H14V16.500H11.400Z" fill="#b1060f" />
        </svg>
      </AppSlot>
      <AppSlot>
        <svg width="21" height="19" viewBox="0 0 21 19">
          <path d="M0 7L10.500 0L21 7V19H0Z" fill="#1568b8" />
          <path d="M2.500 5.500H18.500V13H2.500Z" fill="#e8f4fc" />
          <path d="M0 7L10.500 13L21 7V19H0Z" fill="#35a8ec" />
          <path d="M0 19L10.500 13L21 19Z" fill="#5cc4f8" />
        </svg>
      </AppSlot>
      <AppSlot $run $active>
        <svg width="20" height="20" viewBox="0 0 20 20">
          <path d="M3 0L10 8L7.500 9.500Z" fill="#f0f6fa" />
          <path d="M1 10L10 9L13 19Z" fill="#3a92dc" />
          <path d="M10 9L19 8L13 19Z" fill="#8cc6f2" />
          <path d="M10 9L16 5L14.500 12Z" fill="#2468b8" />
        </svg>
      </AppSlot>
      <AppSlot $run>
        <svg width="18" height="18" viewBox="0 0 18 18">
          <rect width="18" height="18" rx="2.500" fill="#b30b00" />
          <path d="M4 13.500C6 12 9 7 8.500 4.500C8 3 7 5 9 8C10.500 10.500 13 12 14.500 11C14.500 9.500 9 9.500 4 13.500Z" fill="none" stroke="#fff" strokeWidth="1.200" />
        </svg>
      </AppSlot>
      <AppSlot $run>
        <svg width="20" height="20" viewBox="0 0 20 20">
          <circle cx="10" cy="10" r="6.800" fill="#3c3f42" stroke="#8b9094" strokeWidth="2.500" />
          <path d="M10 0V20M0 10H20M3 3L17 17M17 3L3 17" stroke="#8b9094" strokeWidth="3.200" strokeDasharray="3.200 13.600" />
          <circle cx="10" cy="10" r="5.500" fill="#d8e0e6" />
          <circle cx="10" cy="10" r="3.600" fill="#1d64b4" />
        </svg>
      </AppSlot>
      <AppSlot $run>
        <svg width="24" height="24" viewBox="0 0 24 24">
          <circle cx="11" cy="13" r="9.500" fill="#fbc116" />
          <path d="M11 13L2.800 8.200A9.500 9.500 0 0 1 19.200 8.200Z" fill="#e33b2e" />
          <path d="M11 13L2.800 8.200A9.500 9.500 0 0 0 10 22.500Z" fill="#2da94f" />
          <circle cx="11" cy="13" r="4.600" fill="#fff" />
          <circle cx="11" cy="13" r="3.500" fill="#2a78e4" />
          <circle cx="18.500" cy="5.500" r="5.500" fill="#7b1fa2" />
          <text x="18.500" y="8.200" fontSize="7.500" fill="#fff" textAnchor="middle" fontFamily="Roboto, sans-serif">
            C
          </text>
        </svg>
      </AppSlot>
      <AppSlot $run>
        <svg width="20" height="20" viewBox="0 0 20 20">
          <circle cx="10" cy="10" r="9.500" fill="#2a9fe6" />
          <rect x="4.500" y="7" width="7.500" height="6.500" rx="1.500" fill="#fff" />
          <path d="M12.500 9.500L15.500 7V13.500L12.500 11Z" fill="#fff" />
        </svg>
      </AppSlot>
      <AppSlot $run>
        <Voice>
          <b>VOICE</b>
          <i>MEETER</i>
        </Voice>
      </AppSlot>
    </Apps>
    <Tray>
      <Center $w={26}>
        <svg width="12" height="8" viewBox="0 0 12 8">
          <path d="M1 7L6 1.500L11 7" fill="none" stroke="#fff" strokeWidth="1.200" />
        </svg>
      </Center>
      <Center $w={27}>
        <svg width="15" height="15" viewBox="0 0 15 15">
          <path d="M2 7A5.500 5.500 0 0 1 12 4.500M12.500 1V5H8.500M3 14V10H7M3.500 10.500Q5 13 8 13" fill="none" stroke="#e4ecee" strokeWidth="1.200" />
          <circle cx="11.500" cy="11.500" r="3.300" fill="#1f82dc" />
        </svg>
      </Center>
      <Center $w={26}>
        <svg width="11" height="14" viewBox="0 0 11 14">
          <rect x="3.500" y="0.500" width="4" height="8" rx="2" fill="#3b6f80" stroke="#8ad2ec" />
          <path d="M1 6V7A4.500 4.500 0 0 0 10 7V6M5.500 11V14" fill="none" stroke="#8ad2ec" />
        </svg>
      </Center>
      <Center $w={38}>ESP</Center>
      <Center $w={26}>
        <svg width="14" height="12" viewBox="0 0 14 12">
          <path d="M0.500 4.500Q7-1.500 13.500 4.500M2.500 7Q7 2.700 11.500 7M4.500 9.300Q7 7 9.500 9.300" fill="none" stroke="#fff" strokeWidth="1.200" />
          <circle cx="7" cy="10.800" r="1.200" fill="#fff" />
        </svg>
      </Center>
      <Center $w={14}>
        <svg width="13" height="12" viewBox="0 0 13 12">
          <path d="M1 4.500H3L6 1.500V10.500L3 7.500H1Z" fill="none" stroke="#fff" />
          <path d="M8 4Q9.200 6 8 8M9.800 2.500Q12.500 6 9.800 9.500" fill="none" stroke="#fff" />
        </svg>
      </Center>
      <Center $w={26}>
        <svg width="14" height="12" viewBox="0 0 14 12">
          <path d="M3 5V10H11.500V4H6" fill="#fff" stroke="#fff" />
          <path d="M12.800 5.500V8.500M1 0.500V3M4 0.500V3M0.500 3H4.500V5H0.500Z" stroke="#fff" fill="none" />
        </svg>
      </Center>
      <Clock>
        <span>10:54 p. m.</span>
        <span>25/01/2023</span>
      </Clock>
      <Badge>5</Badge>
    </Tray>
  </Tasks>
);

const App = () => {
  return (
    <Container>
      <GlobalStyle />
      <Defs />
      <Header>
        <Logo>
          <Icon name="app" size={19} />
        </Logo>
        <HeadMain>
          <TitleRow>
            <Quick>
              {quickItems.map(([name, w, size, color], i) => (
                <Center key={i} $w={w} $color={color}>
                  {name === "|" ? <Divider /> : <Icon name={name} size={size} />}
                </Center>
              ))}
            </Quick>
            <Title>Solid Edge 2022 - Resultados de la simulación - [Número de documento/Número de revisión-Título]</Title>
            <WinBtns>
              <Icon name="min" size={10} />
              <Icon name="restore" size={10} />
              <Icon name="x" size={9} />
            </WinBtns>
          </TitleRow>
          <TabRow>
            <Tab $w={42} $on>
              Inicio
            </Tab>
            <Tab $w={80}>Visualización</Tab>
            <Tab $w={87}>Barra de colores</Tab>
            <Tab $w={42}>Ver</Tab>
            <Siemens>SIEMENS</Siemens>
            <DocBtns>
              <Icon name="smile" size={11} />
              <Icon name="sad" size={11} />
              <Help>?</Help>
              <Icon name="min" size={7} />
              <Icon name="restore" size={8} />
              <Icon name="x" size={8} />
            </DocBtns>
          </TabRow>
        </HeadMain>
      </Header>
      <Ribbon />
      <CommandBar>
        <Grip />
        {commandItems.map(([icon, label, w]) => (
          <Command key={label} $w={w}>
            <Icon name={icon} size={11} />
            {label}
          </Command>
        ))}
      </CommandBar>
      <DocTabs>
        <DocTab>
          <Icon name="part" size={12} />
          <span>Número de documento/Nú...</span>
          <Icon name="x" size={9} />
        </DocTab>
        <DocNav>
          <Icon name="left" size={8} />
          <Icon name="right" size={8} />
          <Icon name="caret" size={8} />
          <Icon name="x" size={9} />
        </DocNav>
      </DocTabs>
      <Stage>
        <Model />
        <LeftSide>
          <SplitBar>
            <Dots />
          </SplitBar>
          <DocLine>
            <Icon name="part" size={10} />
            <Icon name="lock" size={11} />
            <DocName>Número de documento/Número de revisi</DocName>
          </DocLine>
          <Notes>
            {notes.map((n) => (
              <div key={n}>{n}</div>
            ))}
          </Notes>
          <CubeWrap>
            <ViewCube />
          </CubeWrap>
        </LeftSide>
        <SimPanel />
        <Legend>
          <Unit>MPa</Unit>
          <ScaleWrap>
            <Labels>
              {scale.map((s) => (
                <Label key={s}>{s}</Label>
              ))}
            </Labels>
            <ColorBar />
          </ScaleWrap>
          <Limit>
            Límite elástico: 290
            <svg width="15" height="8" viewBox="0 0 15 8">
              <path d="M5 4H15" stroke="#d01828" strokeWidth="1.200" />
              <path d="M0 4L8 0.800V7.200Z" fill="#d01828" />
            </svg>
          </Limit>
        </Legend>
      </Stage>
      <StatusBar />
      <Taskbar />
    </Container>
  );
};

// ---------- styles ----------

const GlobalStyle = createGlobalStyle`
  * {
    box-sizing: border-box;
  }
  body {
    margin: 0;
    overflow: hidden;
    background: #fff;
  }
`;

const ui = `"Noto Sans", "Open Sans", sans-serif`;
const sans = `"Liberation Sans", Arial, sans-serif`;

const Container = styled.div`
  width: 1280px;
  height: 720px;
  display: flex;
  flex-direction: column;
  overflow: hidden;
  background: #fefefe;
  font-family: ${sans};
  font-size: 9px;
  color: #4a4a4a;
  white-space: nowrap;
`;

const DefsSvg = styled.svg`
  position: absolute;
`;

const IconSvg = styled.svg`
  display: block;
  flex: none;
`;

const Header = styled.header`
  display: flex;
  height: 42px;
  flex: none;
  border-bottom: 1px solid #d2d6dc;
`;

const Logo = styled.div`
  width: 26px;
  height: 26px;
  margin: 5px 25px 0 5px;
  display: flex;
  align-items: center;
  justify-content: center;
  border: 1px solid #7c96b8;
  border-radius: 3px;
  background: #fff;
`;

const HeadMain = styled.div`
  flex: 1;
  min-width: 0;
`;

const TitleRow = styled.div`
  display: flex;
  height: 23px;
`;

const Quick = styled.div`
  display: flex;
  align-items: center;
  width: 388px;
`;

const Center = styled.div<{ $w: number; $color?: string }>`
  display: flex;
  flex: none;
  align-items: center;
  justify-content: center;
  width: ${(p) => p.$w}px;
  color: ${(p) => p.$color || "inherit"};
`;

const Divider = styled.div`
  width: 1px;
  height: 14px;
  background: #e8e8e8;
`;

const Title = styled.div`
  font-family: ${ui};
  font-size: 9px;
  letter-spacing: -0.28px;
  line-height: 23px;
  color: #555;
  width: 700px;
`;

const WinBtns = styled.div`
  display: flex;
  flex: 1;
  align-items: center;
  justify-content: flex-end;
  gap: 15px;
  padding: 2px 7px 0 0;
  color: #666;
`;

const TabRow = styled.nav`
  display: flex;
  height: 19px;
  padding-left: 3px;
`;

const Tab = styled.div<{ $w: number; $on?: boolean }>`
  width: ${(p) => p.$w}px;
  text-align: center;
  line-height: 19px;
  font-size: 9.3px;
  color: ${(p) => (p.$on ? "#2b579a" : "#555")};
  border: 1px solid ${(p) => (p.$on ? "#d2d6dc" : "transparent")};
  border-bottom: 0;
  background: ${(p) => (p.$on ? "#fefefe" : "none")};
`;

const Siemens = styled.div`
  margin-left: 791px;
  width: 91px;
  font-family: ${sans};
  font-weight: bold;
  font-size: 9px;
  letter-spacing: 0.4px;
  line-height: 18px;
  color: #009088;
`;

const DocBtns = styled.div`
  display: flex;
  align-items: center;
  gap: 5.500px;
  color: #333;
  padding-bottom: 3px;
`;

const Help = styled.div`
  width: 10px;
  height: 11px;
  background: #2a5ca4;
  color: #fff;
  font-weight: bold;
  font-size: 9px;
  line-height: 11px;
  text-align: center;
`;

const RibbonBar = styled.div`
  display: flex;
  height: 70px;
  flex: none;
  padding-top: 4px;
  border-bottom: 1px solid #e4e6ea;
`;

const Group = styled.section<{ $w: number }>`
  width: ${(p) => p.$w}px;
  height: 60px;
  display: flex;
  flex-direction: column;
  border-right: 1px solid #e4e4e4;
`;

const GroupBody = styled.div`
  display: flex;
  flex: none;
  height: 48px;
`;

const GroupName = styled.div<{ $shift?: number }>`
  text-align: center;
  line-height: 12px;
  padding-left: ${(p) => p.$shift || 0}px;
  font-size: 8.7px;
  color: #8e8e8e;
`;

const Big = styled.div<{ $left: number; $width: number }>`
  display: flex;
  flex-direction: column;
  align-items: center;
  flex: none;
  margin-left: ${(p) => p.$left}px;
  width: ${(p) => p.$width}px;
  padding-top: 3px;
`;

const BigText = styled.div`
  display: flex;
  flex-direction: column;
  align-items: center;
  padding-top: 8.500px;
  line-height: 8.700px;
`;

const StyleGrid = styled.div`
  display: grid;
  grid-template-columns: 26px 26px 26px;
  grid-template-rows: 26px 24px;
  width: 108px;
  padding-left: 6px;
  border-right: 1px solid #e4e4e4;
`;

const StyleBtn = styled.div<{ $on?: boolean }>`
  display: flex;
  align-items: center;
  justify-content: center;
  border: ${(p) => (p.$on ? "3px solid #c6d4e8" : "0")};
`;

const Options = styled.div`
  padding-left: 8px;
`;

const Option = styled.div`
  display: flex;
  align-items: center;
  height: 16.700px;
  > span {
    width: 47px;
  }
`;

const Radio = styled.div<{ $on?: boolean }>`
  width: 11px;
  height: 11px;
  margin-right: 5px;
  border-radius: 50%;
  border: 1px solid #b0b0b0;
  background: ${(p) => (p.$on ? "radial-gradient(#666 0 1.600px, #fff 2.400px)" : "#fff")};
`;

const Field = styled.div<{ $w: number; $off?: boolean }>`
  width: ${(p) => p.$w}px;
  height: 17px;
  padding-left: 3px;
  font-family: ${ui};
  font-size: 8.6px;
  line-height: 16px;
  border: 1px solid ${(p) => (p.$off ? "#e2e2e2" : "#a6a6a6")};
  color: ${(p) => (p.$off ? "#aaa" : "#222")};
`;

const SmallList = styled.div`
  margin-left: -2px;
`;

const Small = styled.div`
  display: flex;
  align-items: center;
  gap: 2px;
  height: 16.500px;
`;

const Selects = styled.div`
  padding-left: 7px;
  height: 50px;
`;

const Select = styled.div<{ $w: number; $off?: boolean }>`
  display: flex;
  align-items: center;
  justify-content: space-between;
  width: ${(p) => p.$w}px;
  height: 16.500px;
  padding: 0 1px;
  border: 1px solid ${(p) => (p.$off ? "#e2e2e2" : "#a6a6a6")};
  color: ${(p) => (p.$off ? "#aaa" : "#333")};
  background: #fff;
  font-family: ${ui};
  font-size: 8.8px;
  letter-spacing: -0.1px;
  svg {
    opacity: 0.7;
  }
`;

const Arrows = styled.div`
  display: flex;
  gap: 8px;
  padding: 4px 0 0 4px;
  svg:last-child {
    margin-top: 15px;
  }
`;

const Settings = styled.div`
  padding: 6px 0 0 6px;
`;

const SetRow = styled.div`
  display: flex;
  align-items: center;
  gap: 3px;
`;

const SetIcons = styled.div`
  display: flex;
  gap: 6px;
  padding: 7px 0 0 2px;
`;

const CommandBar = styled.div`
  display: flex;
  align-items: center;
  align-self: flex-end;
  flex: none;
  width: 868px;
  height: 19px;
  border: 1px solid #e6e6e6;
  border-right: 0;
`;

const Grip = styled.div`
  width: 9px;
  height: 13px;
  margin-left: 1px;
  background: repeating-linear-gradient(135deg, #e8e8e8 0 1px, #fff 1px 3px);
  border-right: 4px solid #fefefe;
`;

const Command = styled.div<{ $w: number }>`
  display: flex;
  align-items: center;
  gap: 2px;
  flex: none;
  width: ${(p) => p.$w}px;
`;

const DocTabs = styled.div`
  display: flex;
  align-items: flex-end;
  justify-content: space-between;
  flex: none;
  height: 25px;
  border-bottom: 2px solid #aab6c6;
`;

const DocTab = styled.div`
  display: flex;
  align-items: center;
  width: 184px;
  height: 21px;
  margin-left: 1px;
  padding: 0 2px 0 12px;
  border: 1px solid #c4ccd8;
  border-top: 2px solid #2b579a;
  border-bottom: 0;
  font-family: ${ui};
  font-size: 10.3px;
  letter-spacing: -0.35px;
  color: #56749a;
  span {
    width: 147px;
    padding-left: 3px;
  }
`;

const DocNav = styled.div`
  display: flex;
  align-items: center;
  gap: 4px;
  height: 23px;
  padding-right: 2px;
  color: #666;
`;

const Stage = styled.main`
  position: relative;
  display: flex;
  flex: 1;
  min-height: 0;
`;

const ModelSvg = styled.svg`
  position: absolute;
  left: 0;
  top: 0;
  width: 1280px;
  height: 507px;
`;

const LeftSide = styled.div`
  display: flex;
  flex-direction: column;
  width: 915px;
  z-index: 1;
`;

const SplitBar = styled.div`
  display: flex;
  justify-content: center;
  align-items: center;
  width: 209px;
  height: 7px;
  flex: none;
  border: 1px solid #9a9a9a;
  border-left: 0;
  border-top: 0;
  background: #dcdee2;
`;

const Dots = styled.div`
  width: 26px;
  height: 1px;
  background: repeating-linear-gradient(90deg, #666 0 1.500px, transparent 1.500px 3px);
`;

const DocLine = styled.div`
  display: flex;
  align-items: center;
  gap: 4px;
  width: 230px;
  height: 18px;
  padding-left: 6px;
`;

const DocName = styled.div`
  font-family: ${ui};
  font-weight: bold;
  font-size: 9px;
  letter-spacing: -0.35px;
  color: #000;
`;

const Notes = styled.div`
  padding: 5.500px 0 0 16px;
  font-weight: bold;
  font-size: 10.9px;
  letter-spacing: 0.04px;
  line-height: 12.700px;
  color: #2a9fca;
`;

const CubeWrap = styled.div`
  margin-top: auto;
  padding: 0 0 19px 24px;
`;

const CubeSvg = styled.svg`
  display: block;
`;

const CubeText = styled.text`
  font-family: ${sans};
  fill: #555;
`;

const Panel = styled.aside`
  display: flex;
  flex-direction: column;
  width: 186px;
  height: 472px;
  margin-top: 12px;
  padding: 0 2px 2px;
  z-index: 1;
  background: #fff;
  border: 1px solid #d6d6d6;
`;

const PanelHead = styled.div`
  display: flex;
  align-items: center;
  gap: 3px;
  height: 15px;
  padding-left: 4px;
`;

const PanelTitle = styled.div`
  flex: 1;
  font-family: ${ui};
  font-size: 10px;
  letter-spacing: -0.15px;
  color: #4a6c94;
`;

const PanelBtns = styled.div`
  display: flex;
  align-items: center;
  gap: 5.500px;
  padding-right: 4px;
  color: #333;
`;

const PanelTools = styled.div`
  height: 20px;
  margin-top: 5px;
  padding: 2px 0 0 11px;
  background: #f0f0f0;
`;

const PanelTool = styled.div`
  display: flex;
  align-items: center;
  justify-content: center;
  width: 18px;
  height: 17px;
  background: #fff;
  border: 1px solid #ddd;
`;

const Tree = styled.div`
  flex: 1;
  padding-top: 2px;
  font-size: 8.800px;
  letter-spacing: -0.05px;
  color: #1c1c1c;
`;

const Root = styled.div`
  display: flex;
  align-items: center;
  gap: 4px;
  height: 12px;
  padding-left: 2px;
  font-size: 9px;
  letter-spacing: 0;
`;

const TreeRow = styled.div<{ $indent: number }>`
  display: flex;
  align-items: center;
  height: 12px;
  padding-left: ${(p) => p.$indent}px;
`;

const Slot = styled.div<{ $w: number }>`
  flex: none;
  width: ${(p) => p.$w}px;
`;

const Expander = styled.div`
  width: 6px;
  height: 6px;
  border: 1px solid #aaa;
  font-size: 6px;
  line-height: 4px;
  text-align: center;
  color: #222;
`;

const Check = styled.svg`
  display: block;
  width: 9px;
  height: 9px;
  margin-top: -2px;
  border: 1px solid #7a94b8;
  background: #fff;
`;

const TreeText = styled.span<{ $blue?: boolean }>`
  color: ${(p) => (p.$blue ? "#2424c8" : "inherit")};
`;

const PanelScroll = styled.div`
  height: 18px;
  padding: 5px 0 0 14px;
  background: #f0f0f0;
`;

const Thumb = styled.div`
  width: 136px;
  height: 4px;
  background: #8a8a8a;
`;

const Legend = styled.div`
  flex: 1;
  z-index: 1;
  padding-right: 16px;
  font-weight: bold;
  font-size: 10.8px;
  color: #2a9fca;
`;

const Unit = styled.div`
  margin-top: 138px;
  line-height: 14px;
  text-align: right;
`;

const ScaleWrap = styled.div`
  display: flex;
  justify-content: flex-end;
  align-items: center;
  height: 275px;
  margin-top: 14px;
`;

const Labels = styled.div`
  display: flex;
  flex-direction: column;
`;

const Label = styled.div`
  display: flex;
  align-items: center;
  justify-content: flex-end;
  height: 21.150px;
  &::after {
    content: "";
    width: 5px;
    height: 1px;
    margin-left: 6px;
    background: #444;
  }
`;

const ColorBar = styled.div`
  width: 32px;
  height: 254px;
  background: linear-gradient(#ff2000, #ffff00 19%, #00ff00 39%, #00ffff 60%, #0000ff 79.500%, #8000ff 90%, #ff00ff);
`;

const Limit = styled.div`
  display: flex;
  align-items: center;
  justify-content: flex-end;
  margin: 14px -15px 0 0;
  line-height: 14px;
  letter-spacing: 0.04px;
`;

const Status = styled.div`
  display: flex;
  align-items: center;
  flex: none;
  height: 17px;
  background: #2b579a;
  color: #fff;
`;

const StatusText = styled.div`
  width: 194px;
  margin-left: 611px;
  padding-top: 2px;
  font-family: ${ui};
  font-size: 9.8px;
  letter-spacing: -0.2px;
  color: #eef3fa;
`;

const CommandBox = styled.div`
  width: 115px;
  height: 15px;
  margin-top: 2px;
  padding-left: 3px;
  background: #fff;
  color: #b4b4b4;
  font-family: ${ui};
  font-size: 9.6px;
  letter-spacing: -0.25px;
  line-height: 14px;
`;

const Slider = styled.div`
  display: flex;
  align-items: center;
  width: 97px;
  height: 17px;
  padding-left: 31px;
  background: linear-gradient(#dfe8f4, #dfe8f4) center / 100% 1px no-repeat;
`;

const Knob = styled.div`
  width: 8px;
  height: 13px;
  border: 1.500px solid #e8eef8;
  border-radius: 1px 1px 4px 4px;
  background: #6f8fc4;
`;

const Tasks = styled.footer`
  display: flex;
  align-items: center;
  flex: none;
  height: 40px;
  background: #122a2e;
  color: #fff;
  font-family: ${ui};
`;

const StartBtn = styled.svg`
  width: 20px;
  height: 20px;
  margin: 0 12px 0 365px;
`;

const SearchPill = styled.div`
  display: flex;
  align-items: center;
  gap: 4px;
  width: 84px;
  height: 27px;
  padding-left: 20px;
  border-radius: 14px;
  background: #21383c;
  font-size: 10.2px;
  letter-spacing: -0.35px;
`;

const Apps = styled.div`
  display: grid;
  grid-template-columns: repeat(12, 36.700px);
  height: 40px;
  margin-left: 1.700px;
`;

const AppSlot = styled.div<{ $run?: boolean; $active?: boolean }>`
  display: flex;
  align-items: center;
  justify-content: center;
  position: relative;
  margin: 3px 2px;
  border-radius: 3px;
  background: ${(p) => (p.$active ? "#24393d" : "none")};
  &::after {
    content: "";
    display: ${(p) => (p.$run ? "block" : "none")};
    position: absolute;
    bottom: 1px;
    width: ${(p) => (p.$active ? 13 : 5)}px;
    height: 2px;
    border-radius: 1px;
    background: ${(p) => (p.$active ? "#5cc4f4" : "#9aa6a8")};
  }
`;

const Voice = styled.div`
  display: flex;
  flex-direction: column;
  width: 20px;
  height: 19px;
  font-size: 5.5px;
  line-height: 9px;
  text-align: center;
  background: #4a5154;
  b {
    background: #dc5340;
    line-height: 10px;
  }
  i {
    font-style: normal;
    font-size: 5px;
    font-weight: bold;
  }
`;

const Tray = styled.div`
  display: flex;
  align-items: center;
  margin-left: 81px;
  font-size: 9.8px;
`;

const Clock = styled.div`
  display: flex;
  flex-direction: column;
  align-items: flex-end;
  width: 57px;
  font-size: 10px;
  line-height: 13.500px;
  letter-spacing: -0.35px;
`;

const Badge = styled.div`
  width: 13px;
  height: 13px;
  margin-left: 7px;
  border-radius: 50%;
  background: #4cb8f0;
  color: #10303c;
  font-size: 9px;
  line-height: 13px;
  text-align: center;
`;

export default App;
